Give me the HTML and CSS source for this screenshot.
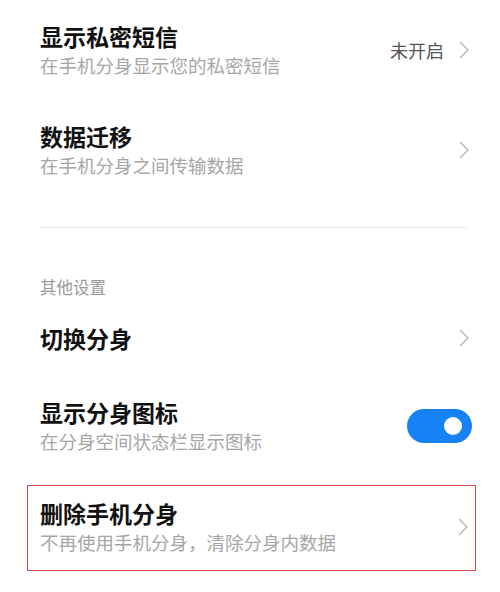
FILE: index.html
```html
<!DOCTYPE html>
<html lang="zh-CN">
<head>
    <meta charset="UTF-8">
    <meta name="viewport" content="width=device-width, initial-scale=1.0">
    <title>手机分身</title>
    <link rel="stylesheet" href="styles.css">
</head>
<body>

<div class="lista">
    <div class="item">
        <div class="textos">
            <div class="titulo">显示私密短信</div>
            <div class="sub">在手机分身显示您的私密短信</div>
        </div>
        <span class="valor">未开启</span>
        <svg class="seta" width="10" height="18" viewBox="0 0 10 18"><polyline points="1,1 9,9 1,17"/></svg>
    </div>

    <div class="item">
        <div class="textos">
            <div class="titulo">数据迁移</div>
            <div class="sub">在手机分身之间传输数据</div>
        </div>
        <svg class="seta" width="10" height="18" viewBox="0 0 10 18"><polyline points="1,1 9,9 1,17"/></svg>
    </div>

    <div class="divisor"></div>

    <div class="secao">其他设置</div>

    <div class="item simples">
        <div class="textos">
            <div class="titulo">切换分身</div>
        </div>
        <svg class="seta" width="10" height="18" viewBox="0 0 10 18"><polyline points="1,1 9,9 1,17"/></svg>
    </div>

    <div class="item">
        <div class="textos">
            <div class="titulo">显示分身图标</div>
            <div class="sub">在分身空间状态栏显示图标</div>
        </div>
        <div class="chave"><span class="bolinha"></span></div>
    </div>

    <div class="item marcado">
        <div class="textos">
            <div class="titulo">删除手机分身</div>
            <div class="sub">不再使用手机分身，清除分身内数据</div>
        </div>
        <svg class="seta" width="10" height="18" viewBox="0 0 10 18"><polyline points="1,1 9,9 1,17"/></svg>
    </div>
</div>

</body>
</html>
```

FILE: styles.css
```css
body {
    background-color: #ffffff;
    margin: 0;
    font-family: "Noto Sans CJK SC", "Noto Sans", sans-serif;
}
.lista {
    padding: 0 31px 0 40px;
}
.item {
    display: flex;
    align-items: center;
    padding: 21px 0 21px;
}
.item.simples {
    padding: 22px 0 23px;
}
.textos {
    flex: 1;
}
.titulo {
    font-size: 23px;
    line-height: 30px;
    font-weight: 600;
    color: #111111;
}
.sub {
    font-size: 18.5px;
    line-height: 28px;
    color: #a6a6a6;
}
.valor {
    font-size: 18px;
    color: #555555;
    margin-right: 15px;
}
.seta {
    flex-shrink: 0;
}
.seta polyline {
    fill: none;
    stroke: #b8b8b8;
    stroke-width: 1.5;
}
.divisor {
    height: 1px;
    background-color: #e9e9e9;
    margin-top: 27px;
    margin-right: 2px;
}
.secao {
    font-size: 16.5px;
    line-height: 20px;
    color: #9a9a9a;
    margin-top: 49px;
    margin-bottom: 4px;
}
.chave {
    width: 65px;
    height: 34px;
    border-radius: 17px;
    background-color: #1782f5;
    position: relative;
    margin-right: -3px;
    flex-shrink: 0;
}
.bolinha {
    position: absolute;
    right: 10px;
    top: 8px;
    width: 18px;
    height: 18px;
    border-radius: 50%;
    background-color: #ffffff;
}
.item.marcado {
    margin: 9px -7px 0 -13px;
    padding: 12px 7px 14px 12px;
    border: 1.5px solid #d24a4c;
}
```
